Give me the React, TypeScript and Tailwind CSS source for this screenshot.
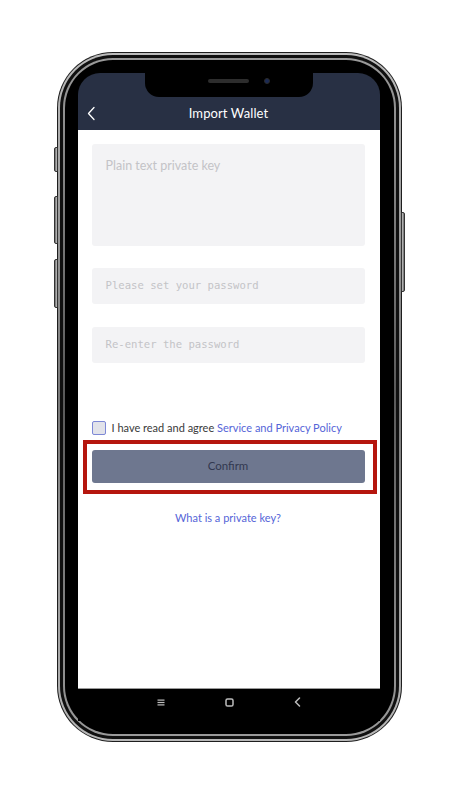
import React from 'react';

const sans = { fontFamily: 'Lato, "Noto Sans", sans-serif' };
const mono = { fontFamily: '"DejaVu Sans Mono", monospace' };

const App: React.FC = () => {
  return (
    <div className="min-h-[798px] w-full bg-white flex justify-center pt-[52px]" style={sans}>
      {/* phone body */}
      <div className="relative">
        {/* side buttons */}
        <div className="absolute -left-[3px] top-[95px] w-[4px] h-[25px] rounded-l-[2px] bg-gradient-to-r from-[#6b6b6b] to-[#c9c9c9] border border-[#333]" />
        <div className="absolute -left-[3px] top-[144px] w-[4px] h-[48px] rounded-l-[2px] bg-gradient-to-r from-[#6b6b6b] to-[#c9c9c9] border border-[#333]" />
        <div className="absolute -left-[3px] top-[207px] w-[4px] h-[49px] rounded-l-[2px] bg-gradient-to-r from-[#6b6b6b] to-[#c9c9c9] border border-[#333]" />
        <div className="absolute -right-[3px] top-[160px] w-[4px] h-[80px] rounded-r-[2px] bg-gradient-to-l from-[#6b6b6b] to-[#c9c9c9] border border-[#333]" />

        <div className="w-[345px] rounded-[56px] bg-[#1e1e1e] p-[1px]">
          <div className="rounded-[55px] bg-gradient-to-b from-[#bdbdbd] via-[#7a7a7a] to-[#b8b8b8] p-[2px]">
            <div className="rounded-[53px] bg-[#101010] p-[3px]">
              <div className="rounded-[50px] bg-gradient-to-b from-[#9a9a9a] via-[#5a5a5a] to-[#9a9a9a] p-[2px]">
                <div className="rounded-[48px] bg-black p-[13px]">
                  {/* screen */}
                  <div className="relative w-[302px] rounded-t-[22px] overflow-hidden bg-black">
                    {/* notch */}
                    <div className="absolute left-[67px] top-0 w-[168px] h-[24px] bg-black rounded-b-[14px] z-10">
                      <div className="absolute left-[63px] top-[6px] w-[41px] h-[4px] rounded-full bg-[#2d2d2d]" />
                      <div className="absolute left-[119px] top-[5px] w-[6px] h-[6px] rounded-full bg-[#1b2a55] border border-[#2b2b2b]" />
                    </div>

                    {/* header */}
                    <div className="bg-[#283044] h-[57px] flex flex-col justify-end">
                      <div className="relative h-[33px] flex items-center justify-center">
                        <svg className="absolute left-[9px] top-[9px]" width="9" height="15" viewBox="0 0 9 15" fill="none">
                          <path d="M7 1.5 L1.5 7.5 L7 13.5" stroke="#ffffff" strokeWidth="1.3" strokeLinecap="round" strokeLinejoin="round" />
                        </svg>
                        <span className="text-white text-[13px] tracking-[0.1px]">Import Wallet</span>
                      </div>
                    </div>

                    {/* content */}
                    <div className="bg-white h-[559px] pl-[14px] pr-[15px] pt-[14px] border-b border-[#9a9a9a] flex flex-col">
                      <div className="h-[102px] rounded-[3px] bg-[#f3f3f5] px-[14px] pt-[8px]">
                        <span className="text-[12.5px] text-[#c3c3c7]">Plain text private key</span>
                      </div>
                      <div className="mt-[22px] h-[36px] rounded-[3px] bg-[#f3f3f5] px-[14px] flex items-center">
                        <span className="text-[10.6px] text-[#c3c3c7]" style={mono}>Please set your password</span>
                      </div>
                      <div className="mt-[23px] h-[36px] rounded-[3px] bg-[#f3f3f5] px-[14px] flex items-center">
                        <span className="text-[10.6px] text-[#c3c3c7]" style={mono}>Re-enter the password</span>
                      </div>

                      <div className="mt-[57px] flex items-center gap-[6px]">
                        <div className="w-[14px] h-[14px] rounded-[2px] border border-[#7d88d6] bg-[#e2e3ea]" />
                        <span className="text-[11px] text-[#3a3a3a]">
                          I have read and agree <span className="text-[#5565d8]">Service and Privacy Policy</span>
                        </span>
                      </div>

                      <div className="relative mt-[13px]">
                        <div className="absolute -left-[9px] -top-[10px] -right-[12px] -bottom-[11px] border-[4px] border-[#b5160e]" />
                        <div className="h-[33px] rounded-[3px] bg-[#6e778f] flex items-center justify-center">
                          <span className="text-[11.5px] text-[#323850]">Confirm</span>
                        </div>
                      </div>

                      <div className="mt-[21px] text-center">
                        <span className="text-[11px] text-[#5565d8]">What is a private key?</span>
                      </div>
                    </div>

                    {/* android nav bar */}
                    <div className="h-[32px] bg-black flex items-center justify-center gap-[60px] pb-[6px]">
                      <svg width="8" height="7" viewBox="0 0 8 7">
                        <rect x="0.5" y="0.5" width="7" height="1.2" fill="#bdbdbd" />
                        <rect x="0.5" y="2.9" width="7" height="1.2" fill="#bdbdbd" />
                        <rect x="0.5" y="5.3" width="7" height="1.2" fill="#bdbdbd" />
                      </svg>
                      <svg width="9" height="9" viewBox="0 0 9 9" fill="none">
                        <rect x="1" y="1" width="7" height="7" rx="1.6" stroke="#bdbdbd" strokeWidth="1.5" />
                      </svg>
                      <svg width="7" height="10" viewBox="0 0 7 10" fill="none">
                        <path d="M5.5 1 L1.5 5 L5.5 9" stroke="#bdbdbd" strokeWidth="1.5" strokeLinecap="round" strokeLinejoin="round" />
                      </svg>
                    </div>
                  </div>
                </div>
              </div>
            </div>
          </div>
        </div>
      </div>
    </div>
  );
};

export default App;
